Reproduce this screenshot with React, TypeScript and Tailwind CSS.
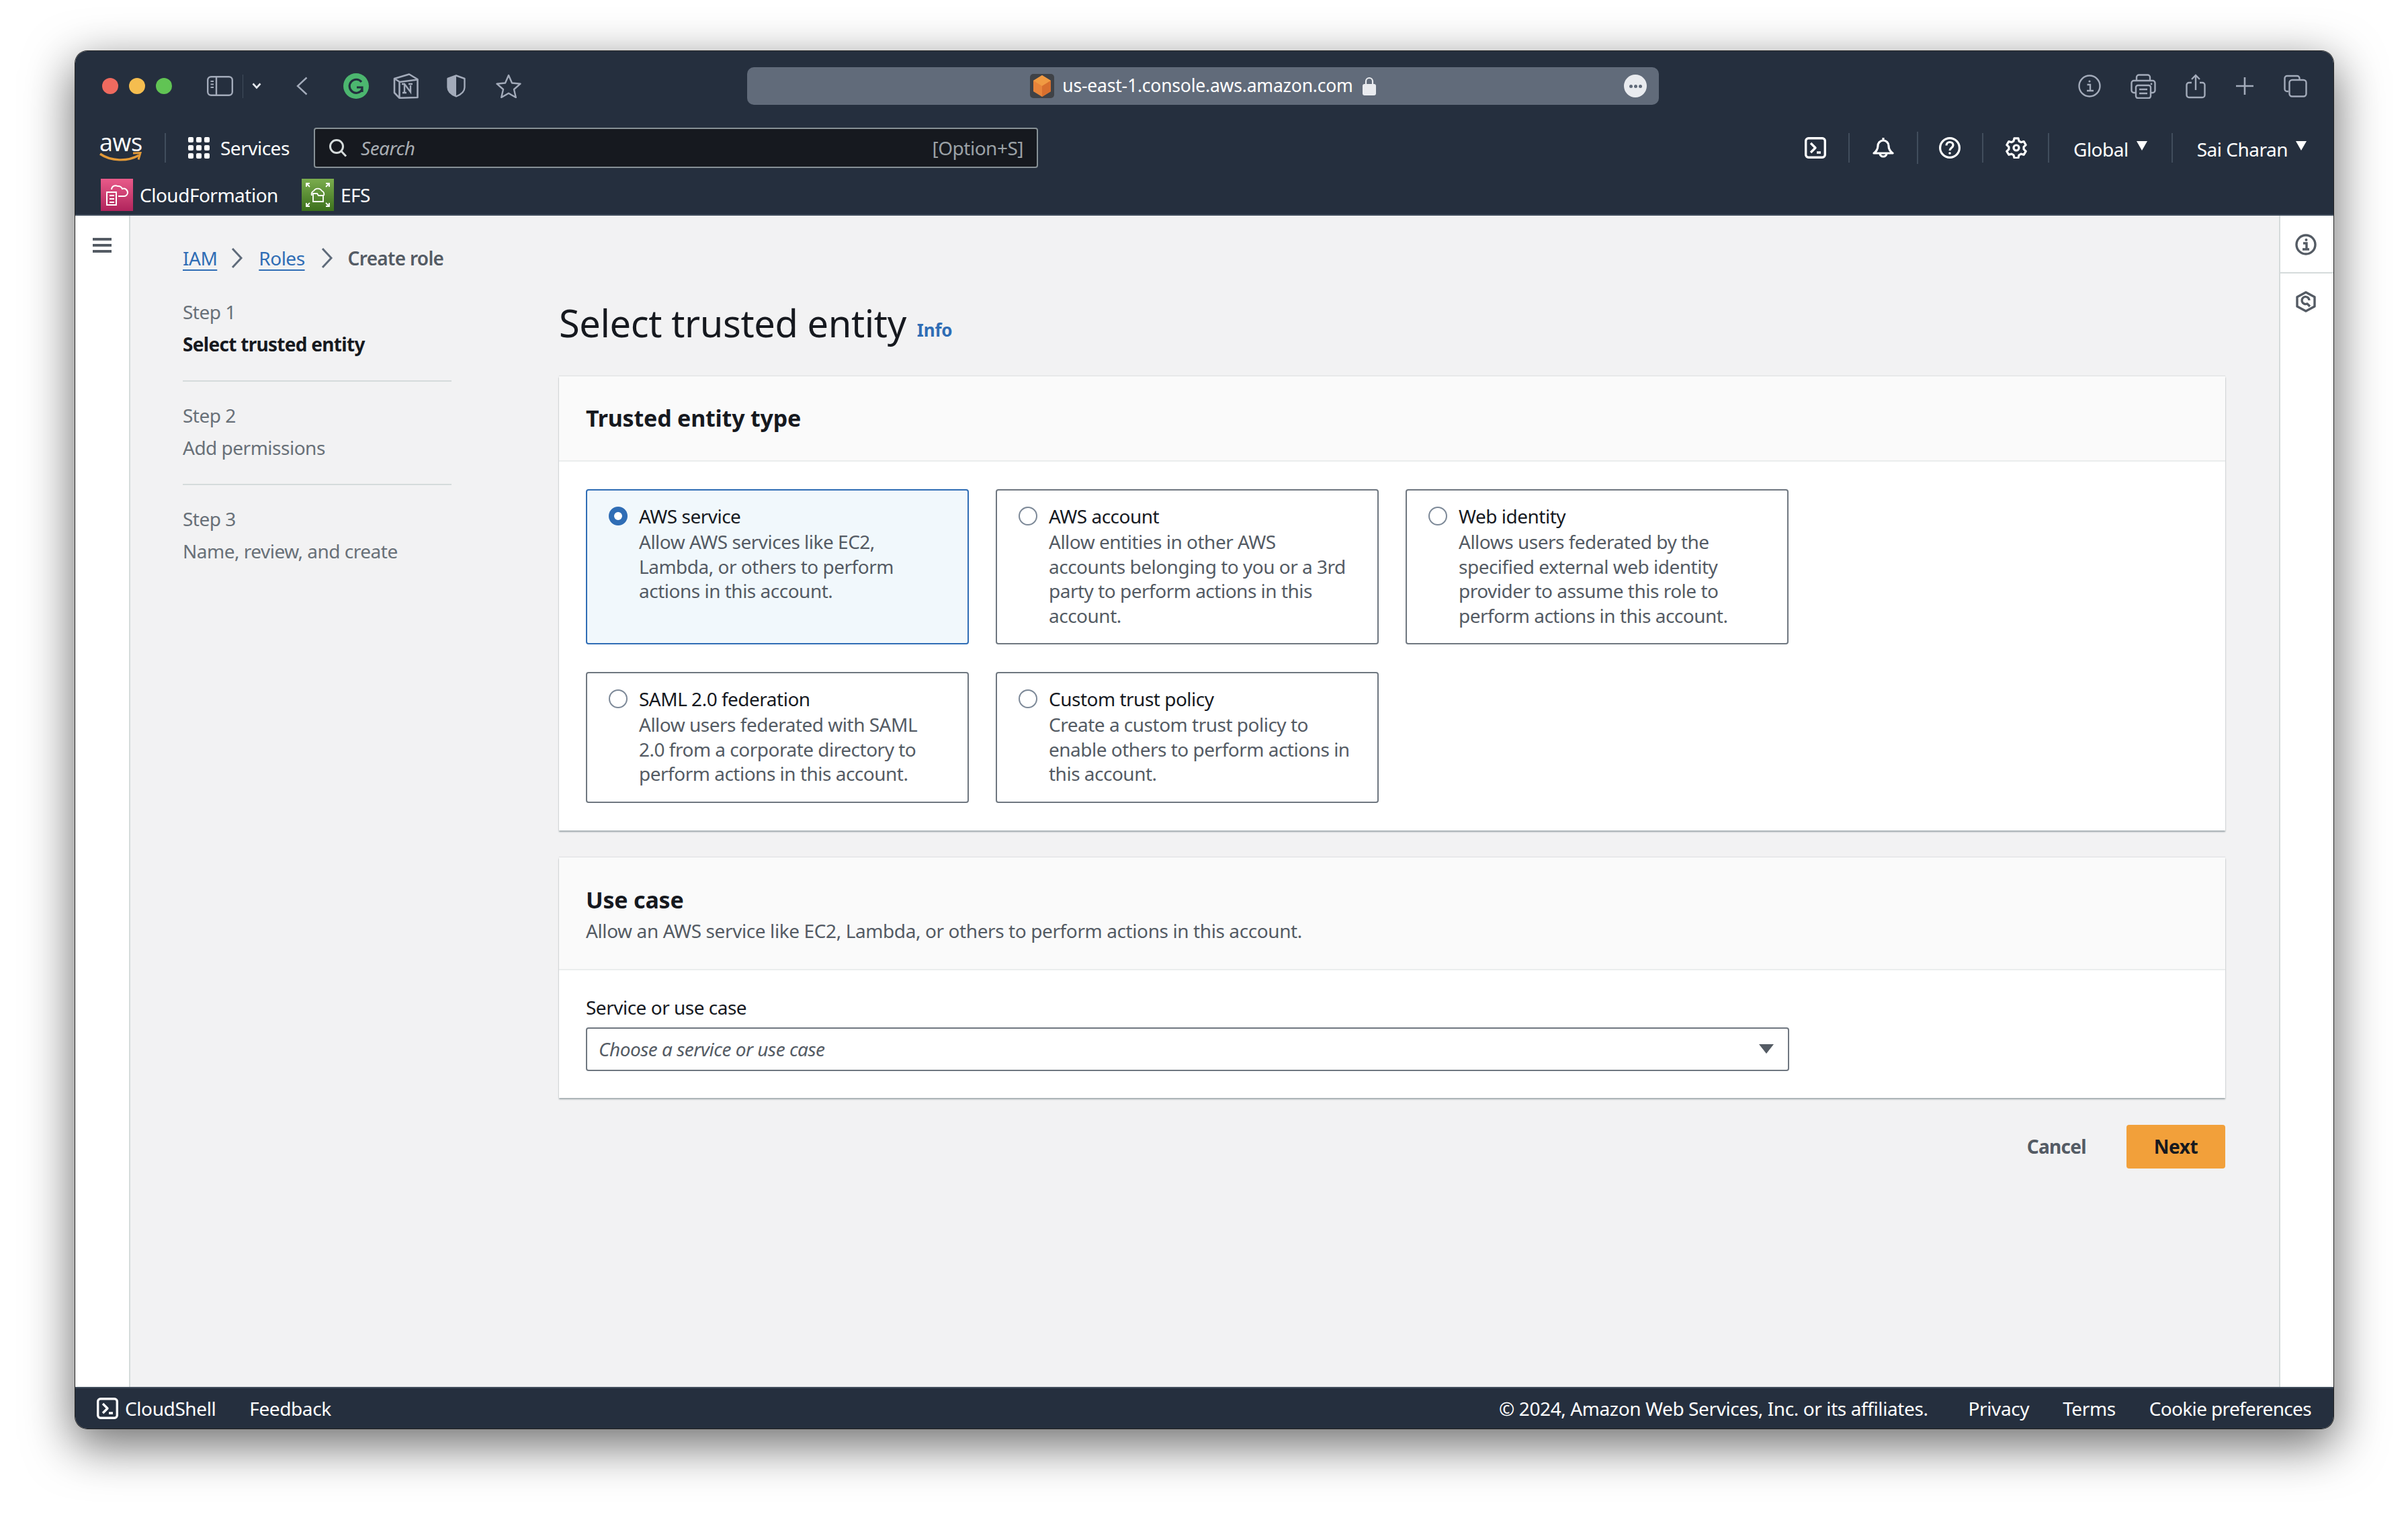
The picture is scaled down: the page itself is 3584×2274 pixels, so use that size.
import React from 'react';

const entityTypes = [
  { title: 'AWS service', lines: ['Allow AWS services like EC2,', 'Lambda, or others to perform', 'actions in this account.'], selected: true },
  { title: 'AWS account', lines: ['Allow entities in other AWS', 'accounts belonging to you or a 3rd', 'party to perform actions in this', 'account.'] },
  { title: 'Web identity', lines: ['Allows users federated by the', 'specified external web identity', 'provider to assume this role to', 'perform actions in this account.'] },
  { title: 'SAML 2.0 federation', lines: ['Allow users federated with SAML', '2.0 from a corporate directory to', 'perform actions in this account.'] },
  { title: 'Custom trust policy', lines: ['Create a custom trust policy to', 'enable others to perform actions in', 'this account.'] },
];

const steps = [
  { step: 'Step 1', label: 'Select trusted entity', active: true },
  { step: 'Step 2', label: 'Add permissions' },
  { step: 'Step 3', label: 'Name, review, and create', last: true },
];

const TerminalIcon = ({ size }: { size: number }) => (
  <svg width={size} height={size} viewBox="0 0 32 32" fill="none" stroke="#fff" strokeWidth="3.4" className="shrink-0">
    <rect x="1.7" y="1.7" width="28.6" height="28.6" rx="4" />
    <path d="M9 9l7 7-7 7" strokeLinejoin="round" />
    <path d="M18 23h6" />
  </svg>
);

const Caret = () => (
  <svg width="16" height="16" viewBox="0 0 16 16" className="shrink-0 mb-[6px]">
    <path d="M0 1h16L8 15z" fill="#fff" />
  </svg>
);

const Chevron = () => (
  <svg width="18" height="32" viewBox="0 0 18 32" fill="none" stroke="#5f6b7a" strokeWidth="3" className="shrink-0">
    <path d="M2 2l13 14L2 30" />
  </svg>
);

const Divider = ({ h = 44 }: { h?: number }) => (
  <div className="w-[2px] bg-[#414d5c] shrink-0" style={{ height: h }} />
);

function BrowserBar() {
  return (
    <div className="h-[104px] flex items-center shrink-0">
      <div className="w-[1000px] flex items-center pl-[40px] shrink-0">
        <div className="w-6 h-6 rounded-full bg-[#ee6a5f]" />
        <div className="w-6 h-6 rounded-full bg-[#f5bd4f] ml-[16px]" />
        <div className="w-6 h-6 rounded-full bg-[#61c454] ml-[16px]" />
        <svg width="39" height="30" viewBox="0 0 39 30" fill="none" stroke="#a3abba" strokeWidth="2.4" className="ml-[52px]">
          <rect x="1.2" y="1.2" width="36.6" height="27.6" rx="5" />
          <path d="M14 1v28" />
          <path d="M5.5 8h4.5M5.5 12.5h4.5M5.5 17h4.5" strokeWidth="1.8" />
        </svg>
        <div className="w-[1px] h-[35px] bg-[#414d5c] ml-[14px]" />
        <svg width="14" height="10" viewBox="0 0 14 10" fill="none" stroke="#e4e7ec" strokeWidth="2.6" className="ml-[13px]">
          <path d="M1.5 1.5L7 7.5l5.5-6" />
        </svg>
        <svg width="17" height="28" viewBox="0 0 17 28" fill="none" stroke="#a3abba" strokeWidth="2.4" className="ml-[52px]">
          <path d="M15.5 1.5L2 14l13.5 12.5" />
        </svg>
        <svg width="38" height="38" viewBox="0 0 38 38" fill="none" className="ml-[53px]">
          <circle cx="19" cy="19" r="19" fill="#4cb66f" />
          <path d="M27 13a10 10 0 1 0 1 11" stroke="#232f3e" strokeWidth="3.2" />
          <path d="M20 21h8v7" stroke="#232f3e" strokeWidth="3.2" />
        </svg>
        <svg width="38" height="38" viewBox="0 0 38 38" fill="none" stroke="#a3abba" strokeWidth="2.6" className="ml-[36px]">
          <path d="M2 8l22-6.5L36.5 9v27l-27 .8L2 29z" strokeLinejoin="round" />
          <path d="M2 8l8 5 26.500-3.500M9.500 13v23" />
          <path d="M14 16h3l9 12V18M13 16h5M23 16h6" strokeWidth="2.4" />
          <path d="M17 16v13M14 29h6" strokeWidth="2.4" />
        </svg>
        <svg width="28" height="34" viewBox="0 0 28 34" fill="none" className="ml-[42px]">
          <path d="M14 1.500L1.500 6v13c0 6 5 10.500 12.500 13.500C21.500 29.500 26.500 25 26.500 19V6z" stroke="#a3abba" strokeWidth="2.4" strokeLinejoin="round" />
          <path d="M14 1.500L1.500 6v13c0 6 5 10.500 12.500 13.500z" fill="#a3abba" />
        </svg>
        <svg width="38" height="36" viewBox="0 0 38 36" fill="none" stroke="#a3abba" strokeWidth="2.4" strokeLinejoin="round" className="ml-[45px]">
          <path d="M19 2l5 11.500 12.500 1.200-9.500 8.300 2.800 12-10.800-6.300L8.200 35 11 23 1.500 14.700 14 13.500z" />
        </svg>
      </div>
      <div className="w-[1357px] h-[56px] rounded-[10px] bg-[#616b7a] flex items-center justify-center relative shrink-0">
        <div className="w-[36px] h-[36px] rounded-[5px] bg-[#3f4247] flex items-center justify-center shrink-0">
          <svg width="30" height="34" viewBox="0 0 30 34">
            <path d="M15 1l13 8v16l-13 8L2 25V9z" fill="#e8843a" />
            <path d="M15 1l13 8-13 8L2 9z" fill="#f09a42" />
            <path d="M15 17l13-8v16l-13 8z" fill="#d86f2e" />
          </svg>
        </div>
        <span className="text-[26.500px] text-white ml-[12px] tracking-[-0.2px]">us-east-1.console.aws.amazon.com</span>
        <svg width="20" height="28" viewBox="0 0 20 28" fill="none" className="ml-[14px]">
          <path d="M5 12V7a5 5 0 0 1 10 0v5" stroke="#e9ebef" strokeWidth="2.2" />
          <rect y="11" width="20" height="17" rx="3" fill="#e9ebef" />
        </svg>
        <div className="absolute right-[18px] top-[11px] w-[34px] h-[34px] rounded-full bg-[#e9ebef] flex items-center justify-center gap-[2px]">
          <div className="w-[5px] h-[5px] rounded-full bg-[#616b7a]" />
          <div className="w-[5px] h-[5px] rounded-full bg-[#616b7a]" />
          <div className="w-[5px] h-[5px] rounded-full bg-[#616b7a]" />
        </div>
      </div>
      <div className="flex items-center ml-[624px]">
        <svg width="34" height="34" viewBox="0 0 34 34" fill="none" stroke="#a3abba" strokeWidth="2.4">
          <circle cx="17" cy="17" r="15.500" />
          <path d="M13.500 15H18v9M13 24h10" />
          <circle cx="17" cy="10" r="1.600" fill="#a3abba" stroke="none" />
        </svg>
        <svg width="38" height="37" viewBox="0 0 38 37" fill="none" stroke="#a3abba" strokeWidth="2.4" className="ml-[44px]">
          <path d="M9 10V5a3.500 3.500 0 0 1 3.500-3.500h13A3.500 3.500 0 0 1 29 5v5" />
          <path d="M8 28H5a3.500 3.500 0 0 1-3.500-3.500V13.500A3.500 3.500 0 0 1 5 10h28a3.500 3.500 0 0 1 3.500 3.500v11A3.500 3.500 0 0 1 33 28h-3" />
          <rect x="8" y="17" width="22" height="19" rx="3" />
          <path d="M13 23h12M13 29h12" />
          <circle cx="31" cy="15" r="1.400" fill="#a3abba" stroke="none" />
        </svg>
        <svg width="30" height="37" viewBox="0 0 30 37" fill="none" stroke="#a3abba" strokeWidth="2.4" className="ml-[44px]">
          <path d="M9 13H5a3.500 3.500 0 0 0-3.500 3.500v15A3.500 3.500 0 0 0 5 35h20a3.500 3.500 0 0 0 3.500-3.500v-15A3.500 3.500 0 0 0 25 13h-4" />
          <path d="M15 24V2M9 8l6-6 6 6" />
        </svg>
        <svg width="28" height="28" viewBox="0 0 28 28" fill="none" stroke="#a3abba" strokeWidth="2.6" className="ml-[44px]">
          <path d="M14 1v26M1 14h26" />
        </svg>
        <svg width="35" height="34" viewBox="0 0 35 34" fill="none" stroke="#a3abba" strokeWidth="2.4" className="ml-[44px]">
          <path d="M7 25H5a3.500 3.500 0 0 1-3.500-3.500v-16A3.500 3.500 0 0 1 5 2h15a3.500 3.500 0 0 1 3.500 3.500V8" />
          <rect x="8.500" y="8" width="25" height="24.500" rx="4" />
        </svg>
      </div>
    </div>
  );
}

function NavBar() {
  return (
    <div className="h-[80px] flex items-center text-white shrink-0">
      <div className="w-[64px] ml-[36px] h-[44px] relative shrink-0">
        <span className="absolute left-[0px] top-[-6px] text-[36px] leading-[40px] tracking-[-0.5px] font-['Open_Sans',sans-serif]">aws</span>
        <svg width="64" height="16" viewBox="0 0 64 16" fill="none" className="absolute left-0 top-[28px]">
          <path d="M1 3c16 11 40 12 58 2" stroke="#e39a38" strokeWidth="3.4" />
          <path d="M50 2l11-.5-3 10" stroke="#e39a38" strokeWidth="3" />
        </svg>
      </div>
      <div className="ml-[33px]"><Divider /></div>
      <div className="ml-[33px] grid grid-cols-3 gap-[4px] w-[32px] shrink-0">
        {Array.from({ length: 9 }).map((_, i) => (
          <div key={i} className="w-[8px] h-[8px] rounded-[2px] bg-white" />
        ))}
      </div>
      <span className="ml-[16px] w-[103px] whitespace-nowrap">Services</span>
      <div className="ml-[36px] w-[1078px] h-[60px] bg-[#16191f] border-2 border-[#879196] rounded-[4px] flex items-center px-[20px] shrink-0">
        <svg width="28" height="28" viewBox="0 0 28 28" fill="none" stroke="#d5dbdb" strokeWidth="3">
          <circle cx="12" cy="12" r="9.500" />
          <path d="M19 19l7 7.500" />
        </svg>
        <span className="ml-[20px] italic text-[#a8adb2]">Search</span>
        <span className="ml-auto text-[#9ba1a6]">[Option+S]</span>
      </div>
      <div className="ml-[1141px] shrink-0"><TerminalIcon size={32} /></div>
      <div className="ml-[33px]"><Divider /></div>
      <svg width="32" height="32" viewBox="0 0 32 32" fill="none" stroke="#fff" strokeWidth="3.2" strokeLinejoin="round" className="ml-[34px] shrink-0">
        <path d="M2 24c4-3 6-6 6-11a8 8 0 0 1 16 0c0 5 2 8 6 11z" />
        <path d="M16 5V1M11 24a5 5 0 0 0 10 0" />
      </svg>
      <div className="ml-[34px]"><Divider h={48} /></div>
      <svg width="32" height="32" viewBox="0 0 32 32" fill="none" stroke="#fff" strokeWidth="3.2" className="ml-[31px] shrink-0">
        <circle cx="16" cy="16" r="14.400" />
        <path d="M11 12.500c0-3 2.200-5 5-5s5 2 5 4.500c0 4-5 4-5 8" />
        <circle cx="16" cy="24" r="1.800" fill="#fff" stroke="none" />
      </svg>
      <div className="ml-[32px]"><Divider /></div>
      <svg width="32" height="32" viewBox="0 0 32 32" fill="none" stroke="#fff" strokeWidth="3.2" strokeLinejoin="round" className="ml-[33px] shrink-0">
        <path d="M13 1.800h6l1 4.200 3 1.700 4.200-1.200 3 5.200-3.100 3v3.400l3.100 3-3 5.200-4.200-1.200-3 1.700-1 4.200h-6l-1-4.200-3-1.700-4.200 1.200-3-5.200 3.100-3v-3.400l-3.100-3 3-5.200L9 7.700 12 6z" />
        <circle cx="16" cy="16" r="4" />
      </svg>
      <div className="ml-[31px]"><Divider /></div>
      <span className="ml-[36px] mt-[4px] whitespace-nowrap">Global</span>
      <div className="ml-[12px]"><Caret /></div>
      <div className="ml-[36px]"><Divider /></div>
      <span className="ml-[36px] mt-[4px] whitespace-nowrap">Sai Charan</span>
      <div className="ml-[12px]"><Caret /></div>
    </div>
  );
}

function FavoritesBar() {
  return (
    <div className="h-[60px] flex items-center text-white pl-[38px] shrink-0">
      <div className="w-[48px] h-[48px] bg-gradient-to-b from-[#e95a8a] to-[#b0235c] shrink-0 flex items-center justify-center">
        <svg width="36" height="34" viewBox="0 0 36 34" fill="none" stroke="#fff" strokeWidth="2">
          <path d="M3 13h14v19H3zM7 18h7M7 23h7M7 28h7" />
          <path d="M10 9a6 6 0 0 1 9-5 7 7 0 0 1 7 4 6 6 0 0 1 8 6 5.500 5.500 0 0 1-6 5H20" />
        </svg>
      </div>
      <span className="ml-[10px] whitespace-nowrap w-[204px]">CloudFormation</span>
      <div className="ml-[37px] w-[48px] h-[48px] bg-gradient-to-b from-[#7bad4e] to-[#3c701c] shrink-0 flex items-center justify-center">
        <svg width="36" height="36" viewBox="0 0 36 36" fill="none" stroke="#fff" strokeWidth="1.800">
          <path d="M1 6V1h5M1 1l5 5M35 6V1h-5M35 1l-5 5M1 30v5h5M1 35l5-5M35 30v5h-5M35 35l-5-5" />
          <path d="M9 19a6 6 0 0 1 3-7 7 7 0 0 1 12 0 6 6 0 0 1 3 7" />
          <path d="M11 16h6l2 3h7v9H11z" />
        </svg>
      </div>
      <span className="ml-[10px] whitespace-nowrap">EFS</span>
    </div>
  );
}

function Sidebar() {
  return (
    <div className="w-[82px] bg-white border-r-2 border-[#d5dbdb] shrink-0 pt-[33px] pl-[26px]">
      <div className="w-[28px] flex flex-col gap-[5px]">
        <div className="h-[4px] bg-[#545b64]" />
        <div className="h-[4px] bg-[#545b64]" />
        <div className="h-[4px] bg-[#545b64]" />
      </div>
    </div>
  );
}

function ToolsPanel() {
  return (
    <div className="w-[81px] bg-white border-l-2 border-[#d5dbdb] shrink-0">
      <div className="h-[84px] flex items-center justify-center pt-[2px] pr-[4px]">
        <svg width="32" height="32" viewBox="0 0 32 32" fill="none" stroke="#545b64" strokeWidth="3.4">
          <circle cx="16" cy="16" r="14" />
          <path d="M12 14h5v9M11 23h10" />
          <circle cx="16.500" cy="9" r="2" fill="#545b64" stroke="none" />
        </svg>
      </div>
      <div className="h-[2px] bg-[#d5dbdb]" />
      <div className="h-[84px] flex items-center justify-center pr-[4px]">
        <svg width="30" height="32" viewBox="0 0 30 32" fill="none" stroke="#545b64" strokeWidth="3.400" strokeLinejoin="round">
          <path d="M15 2l13 7v14l-13 7-13-7V9z" />
          <path d="M20 14a5.500 5.500 0 1 0-3 5l4 4" />
        </svg>
      </div>
    </div>
  );
}

function EntityCard({ title, lines, selected }: { title: string; lines: string[]; selected?: boolean }) {
  return (
    <div className={`border-2 rounded-[4px] pt-[20px] pb-[23px] pl-[32px] flex gap-[17px] ${selected ? 'border-[#2f6db5] bg-[#f1f8fc]' : 'border-[#6f7780] bg-white'}`}>
      {selected ? (
        <div className="w-[28px] h-[28px] rounded-full border-[8px] border-[#2f6db5] bg-white mt-[4px] shrink-0" />
      ) : (
        <div className="w-[28px] h-[28px] rounded-full border-2 border-[#7d8998] bg-white mt-[4px] shrink-0" />
      )}
      <div>
        <div className="h-[36px] leading-[36px] text-[#16191f]">{title}</div>
        <div className="mt-[2px] text-[#545b64] leading-[36.500px]">
          {lines.map((line) => (
            <div key={line} className="whitespace-nowrap">{line}</div>
          ))}
        </div>
      </div>
    </div>
  );
}

export default function App() {
  return (
    <div className="w-[3584px] h-[2274px] bg-white pl-[112px] pt-[76px] overflow-hidden font-['Noto_Sans',sans-serif] text-[28px] tracking-[-0.5px]">
      <div className="w-[3361px] h-[2050px] rounded-[18px] overflow-hidden flex flex-col shadow-[0_22px_70px_4px_rgba(0,0,0,0.56),0_0_0_1px_rgba(0,0,0,0.8)]">
        <header className="h-[245px] bg-[#252f3e] border-b-2 border-[#414d5c] flex flex-col shrink-0">
          <BrowserBar />
          <NavBar />
          <FavoritesBar />
        </header>

        <div className="flex-1 flex min-h-0">
          <Sidebar />
          <main className="flex-1 bg-[#f2f2f3] pl-[78px] pr-[80px] pt-[43px]">
            <nav className="h-[40px] flex items-center text-[#2f6db5]">
              <a className="underline underline-offset-[6px] decoration-2">IAM</a>
              <div className="ml-[21px]"><Chevron /></div>
              <a className="ml-[23px] underline underline-offset-[6px] decoration-2">Roles</a>
              <div className="ml-[24px]"><Chevron /></div>
              <span className="ml-[22px] font-semibold tracking-[-0.7px] text-[#545b64]">Create role</span>
            </nav>

            <div className="flex mt-[40px]">
              <div className="w-[400px] shrink-0">
                {steps.map((s) => (
                  <div key={s.step} className={s.last ? '' : 'border-b-2 border-[#d5dbdb] pb-[34px] mb-[30px]'}>
                    <div className="h-[40px] leading-[40px] text-[#687078]">{s.step}</div>
                    <div className={`h-[40px] leading-[40px] mt-[8px] ${s.active ? 'font-bold text-[#16191f] tracking-[-0.7px]' : 'text-[#687078]'}`}>{s.label}</div>
                  </div>
                ))}
              </div>

              <div className="ml-[160px] flex-1">
                <div className="h-[74px] flex items-center">
                  <h1 className="text-[56px] leading-[74px] tracking-[-0.4px] -mt-[2px] text-[#16191f]">Select trusted entity</h1>
                  <a className="ml-[16px] mt-[20px] text-[#2f6db5] font-bold text-[26px] tracking-[-0.2px]">Info</a>
                </div>

                <section className="mt-[42px] bg-white shadow-[0_2px_2px_rgba(0,28,36,0.35),0_-1px_1px_rgba(0,28,36,0.08)]">
                  <div className="h-[127px] bg-[#fafafa] border-b-2 border-[#eaeded] pl-[40px] flex items-center">
                    <h2 className="text-[34px] tracking-[-0.2px] font-bold text-[#16191f]">Trusted entity type</h2>
                  </div>
                  <div className="px-[40px] pt-[41px] pb-[41px] grid grid-cols-[570px_570px_570px] gap-x-[40px] gap-y-[41px]">
                    {entityTypes.map((e) => (
                      <EntityCard key={e.title} title={e.title} lines={e.lines} selected={e.selected} />
                    ))}
                  </div>
                </section>

                <section className="mt-[40px] bg-white shadow-[0_2px_2px_rgba(0,28,36,0.35),0_-1px_1px_rgba(0,28,36,0.08)]">
                  <div className="bg-[#fafafa] border-b-2 border-[#eaeded] pl-[40px] pt-[43px] pb-[39px]">
                    <h2 className="h-[40px] leading-[40px] text-[34px] tracking-[-0.2px] font-bold text-[#16191f]">Use case</h2>
                    <p className="h-[36px] leading-[36px] mt-[8px] tracking-[-0.4px] text-[#545b64]">Allow an AWS service like EC2, Lambda, or others to perform actions in this account.</p>
                  </div>
                  <div className="pl-[40px] pt-[37px] pb-[40px]">
                    <div className="h-[36px] leading-[36px] text-[#16191f]">Service or use case</div>
                    <div className="mt-[12px] w-[1791px] h-[65px] border-2 border-[#6f7780] rounded-[4px] flex items-center pl-[17px] pr-[20px]">
                      <span className="italic text-[#545b64]">Choose a service or use case</span>
                      <svg width="24" height="16" viewBox="0 0 24 16" className="ml-auto">
                        <path d="M1 1h22L12 15z" fill="#545b64" />
                      </svg>
                    </div>
                  </div>
                </section>

                <div className="mt-[40px] flex items-center justify-end">
                  <span className="font-bold text-[#545b64] tracking-[-0.7px]">Cancel</span>
                  <button className="ml-[60px] w-[147px] h-[65px] rounded-[4px] bg-[#f2a03a] font-bold text-[#16191f]">Next</button>
                </div>
              </div>
            </div>
          </main>
          <ToolsPanel />
        </div>

        <footer className="h-[62px] bg-[#252f3e] border-t-2 border-[#414d5c] flex items-center text-white tracking-[-0.4px] pl-[32px] pr-[33px] shrink-0">
          <TerminalIcon size={32} />
          <span className="ml-[10px]">CloudShell</span>
          <span className="ml-[50px]">Feedback</span>
          <span className="ml-auto">© 2024, Amazon Web Services, Inc. or its affiliates.</span>
          <span className="ml-[60px]">Privacy</span>
          <span className="ml-[50px]">Terms</span>
          <span className="ml-[50px] tracking-[-0.65px]">Cookie preferences</span>
        </footer>
      </div>
    </div>
  );
}
